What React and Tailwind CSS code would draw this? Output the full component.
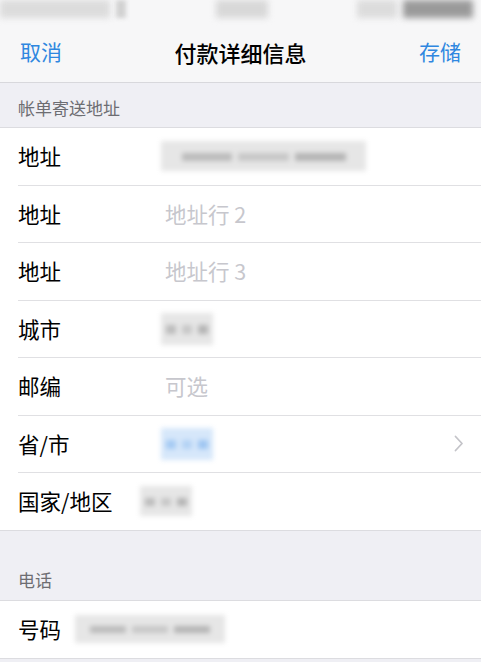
import React from "react";

const Blur = ({ w, h, tone = "gray", className = "" }) => {
  const base = tone === "blue" ? "bg-[#d6e7fa]" : "bg-[#e6e6e6]";
  const dot = tone === "blue" ? "bg-[#8fbdf0]" : "bg-[#a8a8a8]";
  return (
    <div
      className={`relative ${base} blur-[2.5px] ${className}`}
      style={{ width: w, height: h }}
    >
      <div className="absolute inset-x-[10%] top-[38%] flex h-[28%] gap-[6px]">
        <div className={`h-full flex-1 ${dot} opacity-70`} />
        <div className={`h-full flex-1 ${dot} opacity-50`} />
        <div className={`h-full flex-1 ${dot} opacity-80`} />
      </div>
    </div>
  );
};

const Row = ({ label, children, chevron }) => (
  <div className="flex h-[57.5px] items-stretch bg-white pl-[18px]">
    <div className="flex flex-1 items-center border-b border-[#e0e0e3] pr-[17px]">
      <span className="w-[147px] shrink-0 text-[21.5px] text-black">{label}</span>
      <div className="flex flex-1 items-center">{children}</div>
      {chevron && (
        <svg width="10" height="17" viewBox="0 0 10 17">
          <path d="M1.5 1.5 L8 8.5 L1.5 15.5" fill="none" stroke="#c4c4c9" strokeWidth="1.8" strokeLinecap="round" strokeLinejoin="round" />
        </svg>
      )}
    </div>
  </div>
);

const Placeholder = ({ children }) => (
  <span className="text-[21.5px] text-[#c7c7cd]">{children}</span>
);

export default function App() {
  return (
    <div
      className="h-[662px] w-[481px] overflow-hidden bg-[#efeff4]"
      style={{ fontFamily: '"Noto Sans CJK SC", "Noto Sans", sans-serif' }}
    >
      {/* status bar + nav */}
      <div className="border-b border-[#d8d8dc] bg-[#f7f7f8]">
        <div className="flex h-[22px] items-start justify-between">
          <div className="flex gap-[6px]">
            <div className="h-[18px] w-[110px] bg-[#dcdcdc] blur-[3px]" />
            <div className="h-[18px] w-[10px] bg-[#d2d2d2] blur-[2px]" />
          </div>
          <div className="h-[18px] w-[52px] bg-[#d8d8d8] blur-[3px]" />
          <div className="flex gap-[6px] pr-[8px]">
            <div className="h-[18px] w-[40px] bg-[#dcdcdc] blur-[3px]" />
            <div className="h-[18px] w-[70px] bg-[#9a9a9a] blur-[3px]" />
          </div>
        </div>
        <div className="flex h-[60px] items-center justify-between px-[20px]">
          <span className="text-[21px] text-[#2f87e0]">取消</span>
          <span className="text-[22px] font-medium text-black">付款详细信息</span>
          <span className="text-[21px] text-[#2f87e0]">存储</span>
        </div>
      </div>

      {/* billing header */}
      <div className="flex h-[45px] items-end border-b border-[#dcdce0] px-[18px] pb-[7px]">
        <span className="text-[17px] text-[#6d6d72]">帐单寄送地址</span>
      </div>

      <Row label="地址">
        <Blur w={205} h={30} className="-ml-[4px]" />
      </Row>
      <Row label="地址">
        <Placeholder>地址行 2</Placeholder>
      </Row>
      <Row label="地址">
        <Placeholder>地址行 3</Placeholder>
      </Row>
      <Row label="城市">
        <Blur w={52} h={32} className="-ml-[4px]" />
      </Row>
      <Row label="邮编">
        <Placeholder>可选</Placeholder>
      </Row>
      <Row label="省/市" chevron>
        <Blur w={52} h={32} tone="blue" className="-ml-[4px]" />
      </Row>
      <div className="flex h-[57.5px] items-center border-b border-[#dcdce0] bg-white pl-[18px]">
        <span className="w-[122px] shrink-0 text-[21.5px] text-black">国家/地区</span>
        <Blur w={52} h={30} />
      </div>

      {/* phone header */}
      <div className="flex h-[70px] items-end border-b border-[#dcdce0] px-[18px] pb-[7px]">
        <span className="text-[17px] text-[#6d6d72]">电话</span>
      </div>
      <div className="flex h-[58px] items-center border-b border-[#dcdce0] bg-white pl-[18px]">
        <span className="w-[57px] shrink-0 text-[21.5px] text-black">号码</span>
        <Blur w={150} h={28} />
      </div>
    </div>
  );
}
